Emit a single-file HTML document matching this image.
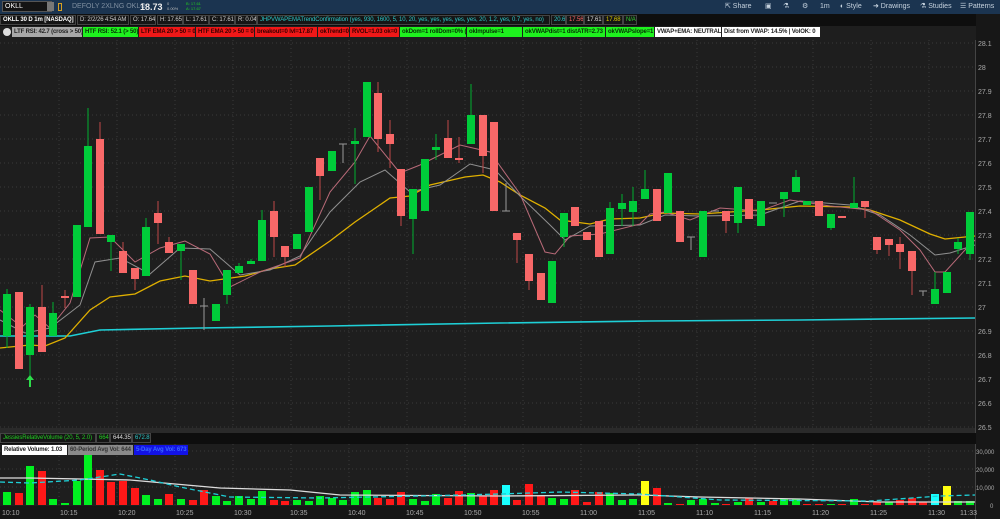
<!DOCTYPE html>
<html><head><meta charset="utf-8"><style>
*{margin:0;padding:0;box-sizing:border-box}
body{width:1000px;height:519px;background:#1e1e1e;overflow:hidden;position:relative;font-family:"Liberation Sans",sans-serif;}
.a{position:absolute;white-space:nowrap;overflow:hidden}
.tb{left:0;top:0;width:1000px;height:14px;background:#1b3450}
.r2{left:0;top:14px;width:1000px;height:12px;background:#0e0e0e}
.r3{left:0;top:26px;width:976px;height:13px;background:#1e1e1e}
.bx{position:absolute;top:1px;height:10px;font-size:6px;letter-spacing:-0.1px;line-height:9px;padding-left:2px;border:1px solid #444;color:#ccc;background:#151515;overflow:hidden;white-space:nowrap}
.lb{position:absolute;top:1px;height:10px;font-size:6px;letter-spacing:-0.15px;line-height:10px;font-weight:bold;padding-left:2px;overflow:hidden;white-space:nowrap}
.gn{background:#1ef21e;color:#063006}.rd{background:#f01818;color:#3a0000}.wh{background:#fff;color:#222}
.ti{position:absolute;top:2px;font-size:7px;color:#c6d2de;line-height:10px}
</style></head><body>
<div class="a tb">
 <div class="a" style="left:2px;top:1px;width:50px;height:11px;background:#141414;border:1px solid #555;color:#fff;font-size:7px;line-height:9px;padding-left:2px">OKLL</div>
 <div class="a" style="left:47px;top:2px;width:7px;height:9px;background:#777"></div>
 <div class="a" style="left:58px;top:3px;width:4px;height:8px;border:1px solid #d8a020"></div>
 <div class="a" style="left:72px;top:2px;font-size:7px;color:#7f8fa0;line-height:10px">DEFOLY 2XLNG OKLO</div>
 <div class="a" style="left:140px;top:1px;font-size:9px;font-weight:bold;color:#eee;line-height:12px">18.73</div>
 <div class="a" style="left:167px;top:1px;font-size:4px;color:#bbb;line-height:5px">0<br>0.00%</div>
 <div class="a" style="left:186px;top:1px;font-size:4px;color:#2c2;line-height:5px">B: 17.61<br>A: 17.67</div>
 <div class="ti" style="left:725px">⇱ Share</div>
 <div class="ti" style="left:765px">▣</div>
 <div class="ti" style="left:783px">⚗</div>
 <div class="ti" style="left:802px">⚙</div>
 <div class="ti" style="left:820px">1m</div>
 <div class="ti" style="left:840px">◐ Style</div>
 <div class="ti" style="left:873px">➜ Drawings</div>
 <div class="ti" style="left:920px">⚗ Studies</div>
 <div class="ti" style="left:960px">☰ Patterns</div>
</div>
<div class="a r2">
 <div class="bx" style="left:0;width:76px;color:#fff;font-weight:bold">OKLL 30 D 1m [NASDAQ]</div>
 <div class="bx" style="left:77px;width:52px">D: 2/2/26 4:54 AM</div>
 <div class="bx" style="left:130px;width:26px">O: 17.64</div>
 <div class="bx" style="left:157px;width:26px">H: 17.65</div>
 <div class="bx" style="left:183px;width:26px">L: 17.61</div>
 <div class="bx" style="left:209px;width:26px">C: 17.61</div>
 <div class="bx" style="left:235px;width:22px">R: 0.04</div>
 <div class="bx" style="left:257px;width:293px;color:#2cc8c8">JHPVWAPEMATrendConfirmation (yes, 930, 1600, 5, 10, 20, yes, yes, yes, yes, yes, 20, 1.2, yes, 0.7, yes, no)</div>
 <div class="bx" style="left:551px;width:15px;color:#2cc8c8">20.6</div>
 <div class="bx" style="left:566px;width:18px;color:#f66">17.56</div>
 <div class="bx" style="left:584px;width:19px;color:#ddd">17.61</div>
 <div class="bx" style="left:603px;width:20px;color:#dc0">17.68</div>
 <div class="bx" style="left:623px;width:14px;color:#3c3">N/A</div>
</div>
<div class="a r3">
 <div class="a" style="left:3px;top:2px;width:8px;height:8px;border-radius:50%;background:#ddd"></div>
 <div class="lb" style="left:12px;width:70px;background:#a8a8a8;color:#222">LTF RSI: 42.7 (cross &gt; 50)</div>
 <div class="lb gn" style="left:83px;width:55px">HTF RSI: 52.1 (&gt; 50)</div>
 <div class="lb rd" style="left:139px;width:56px">LTF EMA 20 &gt; 50 = 0</div>
 <div class="lb rd" style="left:196px;width:58px">HTF EMA 20 &gt; 50 = 0</div>
 <div class="lb rd" style="left:255px;width:62px">breakout=0 lvl=17.87</div>
 <div class="lb rd" style="left:318px;width:31px">okTrend=0</div>
 <div class="lb rd" style="left:350px;width:49px">RVOL=1.03 ok=0</div>
 <div class="lb gn" style="left:400px;width:66px">okDom=1 rollDom=0% (8/8)</div>
 <div class="lb gn" style="left:467px;width:55px">okImpulse=1</div>
 <div class="lb gn" style="left:523px;width:82px">okVWAPdist=1 distATR=2.73</div>
 <div class="lb gn" style="left:606px;width:48px">okVWAPslope=1</div>
 <div class="lb wh" style="left:655px;width:66px">VWAP+EMA: NEUTRAL</div>
 <div class="lb wh" style="left:722px;width:98px">Dist from VWAP: 14.5% | VolOK: 0</div>
</div>
<svg class="a" style="left:0;top:0" width="1000" height="519" viewBox="0 0 1000 519">
<rect x="976" y="14" width="24" height="505" fill="#171717"/>
<rect x="0" y="428" width="976" height="5" fill="#2a2a2a"/>
<rect x="0" y="506" width="976" height="13" fill="#161616"/>
<g stroke="#3a3a3a" stroke-width="1" stroke-dasharray="1,3">
<path d="M0 43H975M0 67H975M0 91H975M0 115H975M0 139H975M0 163H975M0 187H975M0 211H975M0 235H975M0 259H975M0 283H975M0 307H975M0 331H975M0 355H975M0 379H975M0 403H975M0 427H975M0 451H975M0 469H975M0 487H975"/>
<path d="M59 40V428M117 40V428M175 40V428M233 40V428M291 40V428M349 40V428M407 40V428M465 40V428M523 40V428M581 40V428M639 40V428M697 40V428M755 40V428M813 40V428M871 40V428M929 40V428M59 444V506M117 444V506M175 444V506M233 444V506M291 444V506M349 444V506M407 444V506M465 444V506M523 444V506M581 444V506M639 444V506M697 444V506M755 444V506M813 444V506M871 444V506M929 444V506"/>
</g>
<line x1="975.5" y1="40" x2="975.5" y2="519" stroke="#444"/>
<g font-size="7" fill="#aaa" font-family="Liberation Sans">
<text x="978" y="46">28.1</text><text x="978" y="70">28</text><text x="978" y="94">27.9</text><text x="978" y="118">27.8</text><text x="978" y="142">27.7</text><text x="978" y="166">27.6</text><text x="978" y="190">27.5</text><text x="978" y="214">27.4</text><text x="978" y="238">27.3</text><text x="978" y="262">27.2</text><text x="978" y="286">27.1</text><text x="978" y="310">27</text><text x="978" y="334">26.9</text><text x="978" y="358">26.8</text><text x="978" y="382">26.7</text><text x="978" y="406">26.6</text><text x="978" y="430">26.5</text>
<text x="976" y="454" font-size="6">30,000</text><text x="976" y="472" font-size="6">20,000</text><text x="976" y="490" font-size="6">10,000</text><text x="990" y="508" font-size="6">0</text>
<text x="2" y="515">10:10</text><text x="60" y="515">10:15</text><text x="118" y="515">10:20</text><text x="176" y="515">10:25</text><text x="234" y="515">10:30</text><text x="290" y="515">10:35</text><text x="348" y="515">10:40</text><text x="406" y="515">10:45</text><text x="464" y="515">10:50</text><text x="522" y="515">10:55</text><text x="580" y="515">11:00</text><text x="638" y="515">11:05</text><text x="696" y="515">11:10</text><text x="754" y="515">11:15</text><text x="812" y="515">11:20</text><text x="870" y="515">11:25</text><text x="928" y="515">11:30</text><text x="960" y="515">11:33</text>
</g>
<polyline fill="none" stroke="#1ecfd6" stroke-width="1.6" points="0,336 70,336 100,330 200,328 330,326 500,323 650,321 800,320 975,318"/>
<polyline fill="none" stroke="#e0b000" stroke-width="1.3" points="0,348 30,345 45,346 65,338 90,310 110,297 135,294 160,281 185,276 210,281 245,276 270,269 295,265 330,241 355,222 390,198 410,196 430,185 465,177 483,175 500,182 520,195 545,208 560,220 590,224 610,219 640,218 663,213 700,214 760,210 800,206 850,207 870,210 900,220 930,234 945,239 975,236"/>
<polyline fill="none" stroke="#909090" stroke-width="1" points="0,320 25,333 50,328 80,305 95,262 120,258 150,274 180,248 210,249 240,275 270,270 300,256 330,212 360,182 385,170 410,192 440,185 470,164 495,170 520,196 550,225 565,240 590,226 640,225 665,215 700,216 760,215 800,201 850,205 880,215 910,235 935,255 950,253 975,245"/>
<polyline fill="none" stroke="#b86a78" stroke-width="1" points="0,310 22,327 35,315 50,328 70,303 90,238 110,237 135,262 160,248 185,241 210,254 230,287 260,272 300,258 330,192 355,162 370,136 400,173 420,165 460,145 490,152 520,194 545,252 555,254 570,236 600,234 640,224 650,214 665,212 690,220 720,208 760,211 790,200 830,206 870,210 900,230 920,250 935,272 945,272 965,250 975,240"/>
<g stroke="#00b030" fill="#00cc3a">
<path fill="none" d="M7 289V348M30 304V387M53 302V313M88 108V146M111 235V271M146 218V227M181 244V280M227 295V304M239 263V266M251 259V261M262 210V220M355 128V184M413 219V254M436 134V160M471 84V115M564 237V247M610 202V208M622 194V226M633 187V226M645 170V189M738 223V233M784 199V217M796 170V177M831 228V230M854 177V203M935 272V289M958 238V254M970 254V260"/>
<g stroke="none">
<rect x="3" y="294" width="8" height="42"/><rect x="26" y="307" width="8" height="48"/><rect x="49" y="313" width="8" height="23"/><rect x="73" y="225" width="8" height="72"/><rect x="84" y="146" width="8" height="81"/><rect x="107" y="235" width="8" height="7"/><rect x="142" y="227" width="8" height="49"/><rect x="177" y="244" width="8" height="7"/><rect x="212" y="304" width="8" height="17"/><rect x="223" y="270" width="8" height="25"/><rect x="235" y="266" width="8" height="7"/><rect x="247" y="261" width="8" height="3"/><rect x="258" y="220" width="8" height="41"/><rect x="293" y="234" width="8" height="15"/><rect x="305" y="187" width="8" height="45"/><rect x="328" y="151" width="8" height="20"/><rect x="351" y="141" width="8" height="3"/><rect x="363" y="82" width="8" height="55"/><rect x="409" y="189" width="8" height="30"/><rect x="421" y="159" width="8" height="52"/><rect x="432" y="147" width="8" height="3"/><rect x="467" y="115" width="8" height="29"/><rect x="548" y="261" width="8" height="42"/><rect x="560" y="213" width="8" height="24"/><rect x="606" y="208" width="8" height="46"/><rect x="618" y="203" width="8" height="6"/><rect x="629" y="201" width="8" height="11"/><rect x="641" y="189" width="8" height="10"/><rect x="664" y="173" width="8" height="40"/><rect x="699" y="211" width="8" height="46"/><rect x="734" y="187" width="8" height="36"/><rect x="757" y="201" width="8" height="25"/><rect x="780" y="192" width="8" height="7"/><rect x="792" y="177" width="8" height="15"/><rect x="803" y="201" width="8" height="4"/><rect x="827" y="214" width="8" height="14"/><rect x="850" y="203" width="8" height="5"/><rect x="931" y="289" width="8" height="15"/><rect x="943" y="272" width="8" height="21"/><rect x="954" y="242" width="8" height="7"/><rect x="966" y="212" width="8" height="42"/>
</g></g>
<g stroke="#c04848" fill="#f86868">
<path fill="none" d="M42 285V307M65 290V308M100 122V139M123 242V251M135 279V290M158 201V244M169 237V242M274 201V257M285 257V267M320 176V200M378 82V152M390 120V168M401 216V226M448 120V138M459 137V163M483 156V173M517 240V263M529 281V290M726 221V233M865 207V218M877 250V254M889 245V256M900 237V269M912 271V295"/>
<g stroke="none">
<rect x="15" y="292" width="8" height="77"/><rect x="38" y="307" width="8" height="45"/><rect x="61" y="296" width="8" height="2"/><rect x="96" y="139" width="8" height="95"/><rect x="119" y="251" width="8" height="22"/><rect x="131" y="268" width="8" height="11"/><rect x="154" y="213" width="8" height="10"/><rect x="165" y="242" width="8" height="11"/><rect x="189" y="270" width="8" height="34"/><rect x="270" y="211" width="8" height="26"/><rect x="281" y="246" width="8" height="11"/><rect x="316" y="158" width="8" height="18"/><rect x="374" y="93" width="8" height="46"/><rect x="386" y="134" width="8" height="10"/><rect x="397" y="169" width="8" height="47"/><rect x="444" y="138" width="8" height="20"/><rect x="455" y="158" width="8" height="2"/><rect x="479" y="115" width="8" height="41"/><rect x="490" y="122" width="8" height="89"/><rect x="513" y="233" width="8" height="7"/><rect x="525" y="254" width="8" height="27"/><rect x="537" y="273" width="8" height="27"/><rect x="571" y="207" width="8" height="19"/><rect x="583" y="232" width="8" height="8"/><rect x="595" y="221" width="8" height="36"/><rect x="653" y="189" width="8" height="32"/><rect x="676" y="211" width="8" height="31"/><rect x="722" y="211" width="8" height="10"/><rect x="745" y="199" width="8" height="20"/><rect x="815" y="201" width="8" height="15"/><rect x="838" y="216" width="8" height="2"/><rect x="861" y="201" width="8" height="6"/><rect x="873" y="237" width="8" height="13"/><rect x="885" y="239" width="8" height="6"/><rect x="896" y="244" width="8" height="8"/><rect x="908" y="251" width="8" height="20"/>
</g></g>
<path fill="none" stroke="#999" stroke-width="1" d="M200 306H208M204 298V330M339 144H347M343 144V163M502 211H510M506 183V211M687 237H695M691 237V250M711 211H719M769 203H777M919 291H927M923 291V296"/>
<path d="M30 375L26 380H29V387H31V380H34Z" fill="#2ddc4a"/>
<g>
<path fill="#00f020" d="M3 492h8v13h-8zM26 466h8v39h-8zM49 499h8v6h-8zM61 503h8v2h-8zM73 481h8v24h-8zM84 453h8v52h-8zM142 495h8v10h-8zM154 499h8v6h-8zM177 499h8v6h-8zM212 496h8v9h-8zM223 501h8v4h-8zM235 496h8v9h-8zM247 499h8v6h-8zM258 491h8v14h-8zM293 500h8v5h-8zM305 501h8v4h-8zM316 496h8v9h-8zM328 498h8v7h-8zM339 500h8v5h-8zM351 492h8v13h-8zM363 490h8v15h-8zM409 499h8v6h-8zM421 501h8v4h-8zM432 494h8v11h-8zM467 493h8v12h-8zM548 498h8v7h-8zM560 499h8v6h-8zM606 493h8v12h-8zM618 500h8v5h-8zM629 499h8v6h-8zM664 503h8v2h-8zM687 500h8v5h-8zM699 499h8v6h-8zM711 503h8v2h-8zM734 502h8v3h-8zM757 502h8v3h-8zM780 499h8v6h-8zM792 499h8v6h-8zM827 504h8v1h-8zM850 499h8v6h-8zM885 502h8v3h-8zM954 501h8v4h-8zM966 501h8v4h-8z"/>
<path fill="#ff1818" d="M15 493h8v12h-8zM38 471h8v34h-8zM96 470h8v35h-8zM107 482h8v23h-8zM119 481h8v24h-8zM131 488h8v17h-8zM165 494h8v11h-8zM189 500h8v5h-8zM200 490h8v15h-8zM270 500h8v5h-8zM281 501h8v4h-8zM374 498h8v7h-8zM386 499h8v6h-8zM397 492h8v13h-8zM444 498h8v7h-8zM455 491h8v14h-8zM479 496h8v9h-8zM490 490h8v15h-8zM513 500h8v5h-8zM525 484h8v21h-8zM537 496h8v9h-8zM571 490h8v15h-8zM583 502h8v3h-8zM595 492h8v13h-8zM653 488h8v17h-8zM676 504h8v1h-8zM722 504h8v1h-8zM745 498h8v7h-8zM769 501h8v4h-8zM803 504h8v1h-8zM815 504h8v1h-8zM838 504h8v1h-8zM861 504h8v1h-8zM873 502h8v3h-8zM896 500h8v5h-8zM908 498h8v7h-8zM919 502h8v3h-8z"/>
<path fill="#18ffff" d="M502 485h8v20h-8zM931 494h8v11h-8z"/>
<path fill="#ffff10" d="M641 481h8v24h-8zM943 486h8v19h-8z"/>
<polyline fill="none" stroke="#ddd" stroke-width="1.3" points="0,478 30,478 130,480 220,488 290,490 340,495 500,496 640,495 700,497 800,499 880,502 975,502"/>
<polyline fill="none" stroke="#1ecfd6" stroke-width="1.3" stroke-dasharray="5,3" points="0,482 30,483 80,480 120,474 150,480 180,487 230,497 320,498 420,496 500,494 560,492 640,494 720,500 870,501 940,496 975,495"/>
</g>
</svg>
<div class="a" style="left:0;top:433px;width:976px;height:11px;background:#0e0e0e">
 <div class="bx" style="left:0;width:96px;color:#2c2;top:0">JessiesRelativeVolume (20, 5, 2.0)</div>
 <div class="bx" style="left:96px;width:14px;color:#2c2;top:0">664</div>
 <div class="bx" style="left:110px;width:22px;color:#ddd;top:0">644.35</div>
 <div class="bx" style="left:132px;width:19px;color:#2cc8c8;top:0">672.8</div>
</div>
<div class="lb wh" style="position:absolute;left:2px;top:445px;width:65px">Relative Volume: 1.03</div>
<div class="lb" style="position:absolute;left:68px;top:445px;width:65px;background:#8a8a8a;color:#333">60-Period Avg Vol: 644</div>
<div class="lb" style="position:absolute;left:134px;top:445px;width:54px;background:#1212e6;color:#3a6aff">5-Day Avg Vol: 673</div>
</body></html>
